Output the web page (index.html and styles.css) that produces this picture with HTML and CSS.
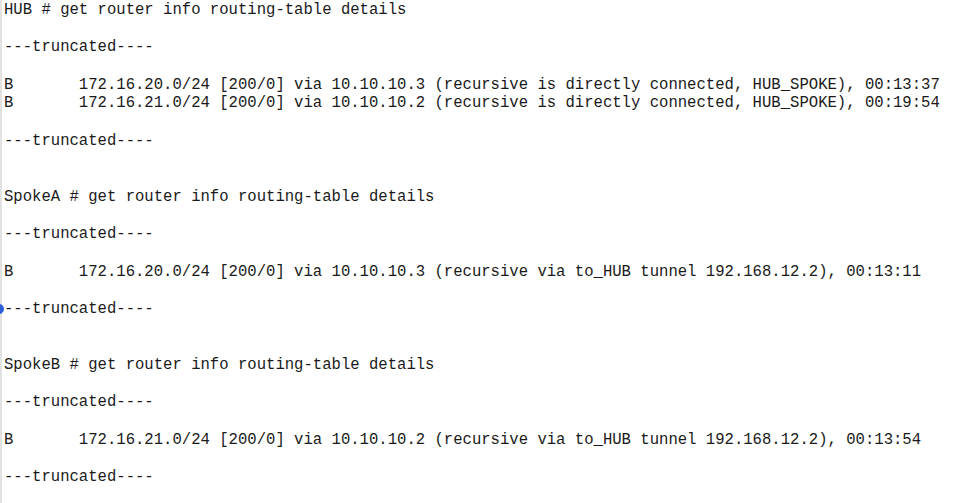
FILE: index.html
```html
<!DOCTYPE html>
<html>
<head>
<meta charset="utf-8">
<link rel="stylesheet" href="styles.css">
</head>
<body>
<div class="terminal">
<pre class="output">HUB # get router info routing-table details

---truncated----

B       172.16.20.0/24 [200/0] via 10.10.10.3 (recursive is directly connected, HUB_SPOKE), 00:13:37
B       172.16.21.0/24 [200/0] via 10.10.10.2 (recursive is directly connected, HUB_SPOKE), 00:19:54

---truncated----


SpokeA # get router info routing-table details

---truncated----

B       172.16.20.0/24 [200/0] via 10.10.10.3 (recursive via to_HUB tunnel 192.168.12.2), 00:13:11

<span class="marked">---truncated----<span class="cursor-dot"></span></span>


SpokeB # get router info routing-table details

---truncated----

B       172.16.21.0/24 [200/0] via 10.10.10.2 (recursive via to_HUB tunnel 192.168.12.2), 00:13:54

---truncated----
</pre>
</div>
</body>
</html>
```

FILE: styles.css
```css
html, body {
  margin: 0;
  padding: 0;
  background: #ffffff;
  overflow: hidden;
}

.terminal {
  width: 975px;
  height: 503px;
  border-left: 2px solid #e2e2e2;
  box-sizing: border-box;
}

.output {
  margin: 0;
  padding: 1px 0 0 2px;
  font-family: "Liberation Mono", "Courier New", monospace;
  font-size: 15.6px;
  line-height: 18.68px;
  color: #1a1a1a;
  white-space: pre;
}

.marked {
  position: relative;
}

.cursor-dot {
  position: absolute;
  left: -10px;
  top: 50%;
  width: 10px;
  height: 10px;
  margin-top: -5px;
  border-radius: 50%;
  background: #2f5fd6;
}
```
